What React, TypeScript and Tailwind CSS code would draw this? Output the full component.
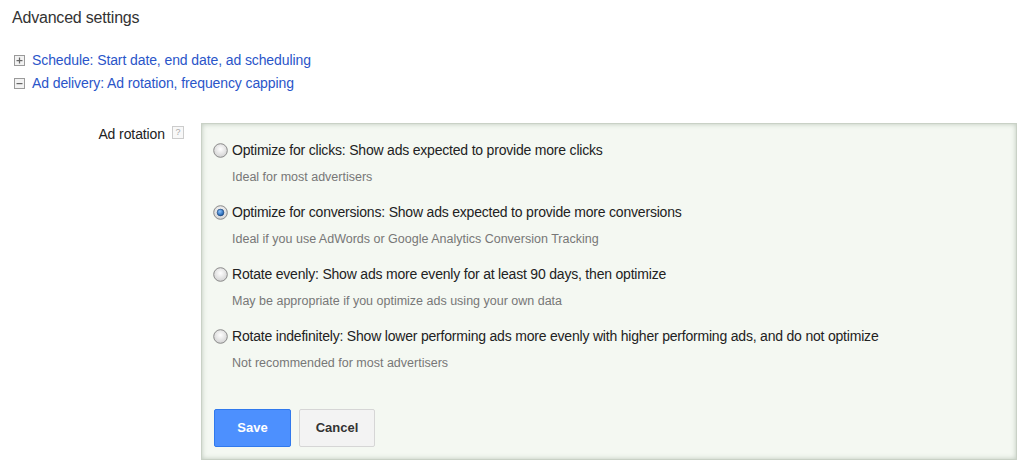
import React from "react";

const options = [
  {
    label: "Optimize for clicks: Show ads expected to provide more clicks",
    sub: "Ideal for most advertisers",
    checked: false,
  },
  {
    label: "Optimize for conversions: Show ads expected to provide more conversions",
    sub: "Ideal if you use AdWords or Google Analytics Conversion Tracking",
    checked: true,
  },
  {
    label: "Rotate evenly: Show ads more evenly for at least 90 days, then optimize",
    sub: "May be appropriate if you optimize ads using your own data",
    checked: false,
  },
  {
    label:
      "Rotate indefinitely: Show lower performing ads more evenly with higher performing ads, and do not optimize",
    sub: "Not recommended for most advertisers",
    checked: false,
  },
];

function Radio({ checked }: { checked: boolean }) {
  return (
    <svg width="15" height="15" viewBox="0 0 15 15" className="shrink-0">
      <defs>
        <radialGradient id={checked ? "rg1" : "rg0"} cx="50%" cy="40%" r="60%">
          <stop offset="0%" stopColor="#ffffff" />
          <stop offset="100%" stopColor="#d2d2d2" />
        </radialGradient>
        <radialGradient id="dot" cx="40%" cy="35%" r="70%">
          <stop offset="0%" stopColor="#8cc4ff" />
          <stop offset="100%" stopColor="#0b4f9e" />
        </radialGradient>
      </defs>
      <circle cx="7.5" cy="7.5" r="6.8" fill={`url(#${checked ? "rg1" : "rg0"})`} stroke="#8a8a8a" strokeWidth="1" />
      {checked && <circle cx="7.5" cy="7.5" r="3.4" fill="url(#dot)" stroke="#1d3f6e" strokeWidth="0.6" />}
    </svg>
  );
}

function BoxIcon({ plus }: { plus: boolean }) {
  return (
    <svg width="11" height="11" viewBox="0 0 11 11" className="shrink-0">
      <rect x="0.5" y="0.5" width="10" height="10" fill="#f2f2f2" stroke="#9a9a9a" />
      <rect x="2.5" y="5" width="6" height="1.2" fill="#666" />
      {plus && <rect x="4.9" y="2.5" width="1.2" height="6" fill="#666" />}
    </svg>
  );
}

export default function App() {
  return (
    <div
      className="w-[1024px] h-[474px] bg-white overflow-hidden"
      style={{ fontFamily: '"Liberation Sans", Arial, sans-serif' }}
    >
      <div className="pl-[12px] pt-[8px] text-[16px] leading-[20px] text-[#333] tracking-[-0.2px]">Advanced settings</div>

      <div className="mt-[23px] pl-[14px] flex flex-col gap-[5px]">
        <div className="flex items-center gap-[7px] h-[18px]">
          <BoxIcon plus />
          <span className="text-[14px] text-[#2a55c9] tracking-[-0.1px]">Schedule: Start date, end date, ad scheduling</span>
        </div>
        <div className="flex items-center gap-[7px] h-[18px]">
          <BoxIcon plus={false} />
          <span className="text-[14px] text-[#2a55c9] tracking-[-0.1px]">Ad delivery: Ad rotation, frequency capping</span>
        </div>
      </div>

      <div className="flex mt-[31px]">
        <div className="w-[201px] shrink-0 flex justify-end items-start pr-[17px] pt-[2px]">
          <span className="text-[14px] text-[#222] leading-[18px] tracking-[-0.1px]">Ad rotation</span>
          <span className="ml-[7px] mt-[1px] w-[12px] h-[13px] border border-[#ccc] bg-[#f8f8f8] text-[9px] leading-[11px] text-[#aaa] flex items-center justify-center">
            ?
          </span>
        </div>
        <div className="w-[816px] h-[337px] bg-[#f4f8f2] border border-[#c9d1c6] shadow-[inset_0_0_5px_rgba(120,140,120,0.45)] pl-[11px] pt-[18px]">
          <div className="flex flex-col">
            {options.map((o, i) => (
              <div key={i} className="h-[62px]">
                <div className="flex items-center gap-[4px] h-[16px]">
                  <Radio checked={o.checked} />
                  <span className="text-[14px] text-[#222] tracking-[-0.2px]">{o.label}</span>
                </div>
                <div className="pl-[19px] mt-[12px] text-[12.5px] text-[#777] leading-[14px]">{o.sub}</div>
              </div>
            ))}
          </div>
          <div className="flex gap-[8px] mt-[19px] pl-[1px]">
            <button className="w-[77px] h-[38px] rounded-[2px] bg-[#4d90fe] border border-[#3079ed] text-white text-[13px] font-bold">
              Save
            </button>
            <button className="w-[76px] h-[38px] rounded-[2px] bg-[#f3f3f3] border border-[#d6d6d6] text-[#333] text-[13px] font-bold">
              Cancel
            </button>
          </div>
        </div>
      </div>
    </div>
  );
}
